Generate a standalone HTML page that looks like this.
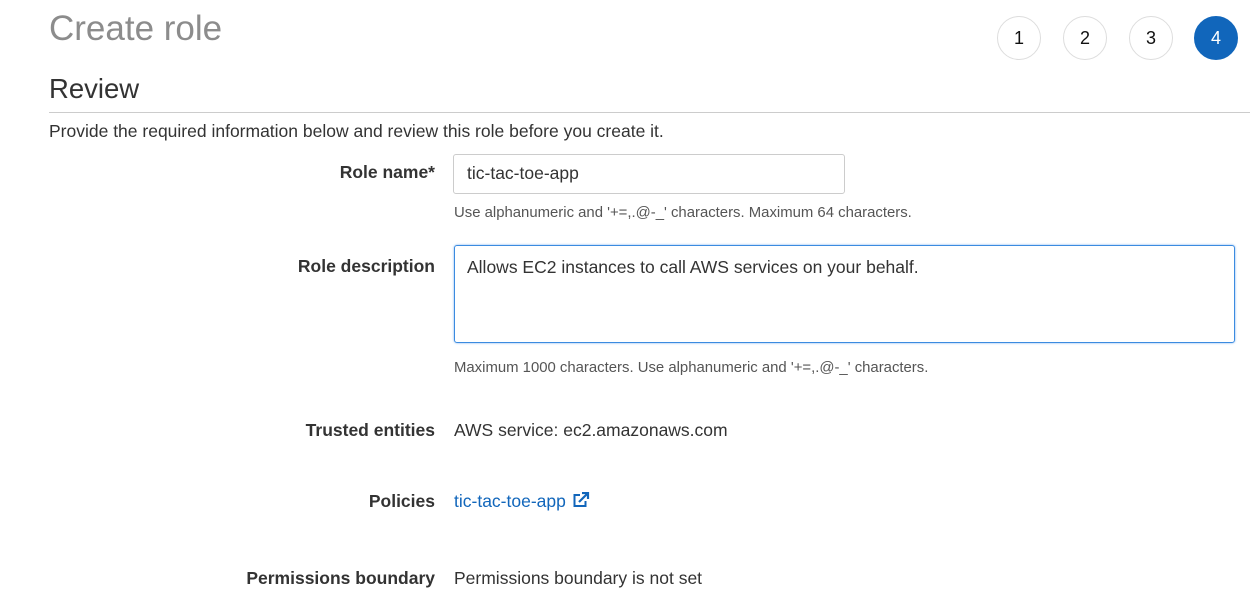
<!DOCTYPE html>
<html><head><meta charset="utf-8"><style>
body{margin:0;width:1255px;height:608px;background:#fff;font-family:"Liberation Sans",Arial,sans-serif;position:relative;overflow:hidden;color:#333}
.a{position:absolute;white-space:nowrap}
.c{position:absolute;top:16px;width:42px;height:42px;border:1px solid #ddd;border-radius:50%;text-align:center;line-height:42px;font-size:18px;color:#111}
.lbl{position:absolute;right:820px;font-weight:bold;font-size:17.5px;color:#333;white-space:nowrap}
.h{font-size:14.9px;color:#555}
</style></head><body>
<div class="a" style="left:49px;top:9px;font-size:35px;color:#8c8c8c">Create role</div>
<div class="c" style="left:997px">1</div>
<div class="c" style="left:1063px">2</div>
<div class="c" style="left:1129px">3</div>
<div class="c" style="left:1194px;background:#1166bb;border-color:#1166bb;color:#fff">4</div>
<div class="a" style="left:49px;top:73px;font-size:27.5px;color:#333">Review</div>
<div class="a" style="left:49px;top:112px;width:1201px;height:1px;background:#ccc"></div>
<div class="a" style="left:49px;top:121px;font-size:17.5px">Provide the required information below and review this role before you create it.</div>
<div class="lbl" style="top:162px">Role name*</div>
<div class="a" style="left:453px;top:154px;height:40px;border:1px solid #ccc;border-radius:3px;box-sizing:border-box;width:392px;font-size:17.5px;padding:8px 13px;color:#333">tic-tac-toe-app</div>
<div class="a h" style="left:454px;top:205px">Use alphanumeric and '+=,.@-_' characters. Maximum 64 characters.</div>
<div class="lbl" style="top:256px">Role description</div>
<div class="a" style="left:454px;top:245px;width:781px;height:98px;border:1px solid #3b8be0;border-radius:3px;box-sizing:border-box;font-size:17.5px;padding:11px 12px;color:#333;box-shadow:0 0 2px #7ab0ee">Allows EC2 instances to call AWS services on your behalf.</div>
<div class="a h" style="left:454px;top:360px">Maximum 1000 characters. Use alphanumeric and '+=,.@-_' characters.</div>
<div class="lbl" style="top:420px">Trusted entities</div>
<div class="a" style="left:454px;top:420px;font-size:17.5px">AWS service: ec2.amazonaws.com</div>
<div class="lbl" style="top:491px">Policies</div>
<div class="a" style="left:454px;top:491px;font-size:17.5px;color:#1166bb">tic-tac-toe-app
<svg width="18" height="16" viewBox="0 0 18 16" style="vertical-align:-1px;margin-left:1px"><path d="M8 3H2.5v11h11V9" fill="none" stroke="#1166bb" stroke-width="2"/><path d="M7 10L15 2M10 1h6v6" fill="none" stroke="#1166bb" stroke-width="2.2"/></svg></div>
<div class="lbl" style="top:568px">Permissions boundary</div>
<div class="a" style="left:454px;top:568px;font-size:17.5px">Permissions boundary is not set</div>
</body></html>
